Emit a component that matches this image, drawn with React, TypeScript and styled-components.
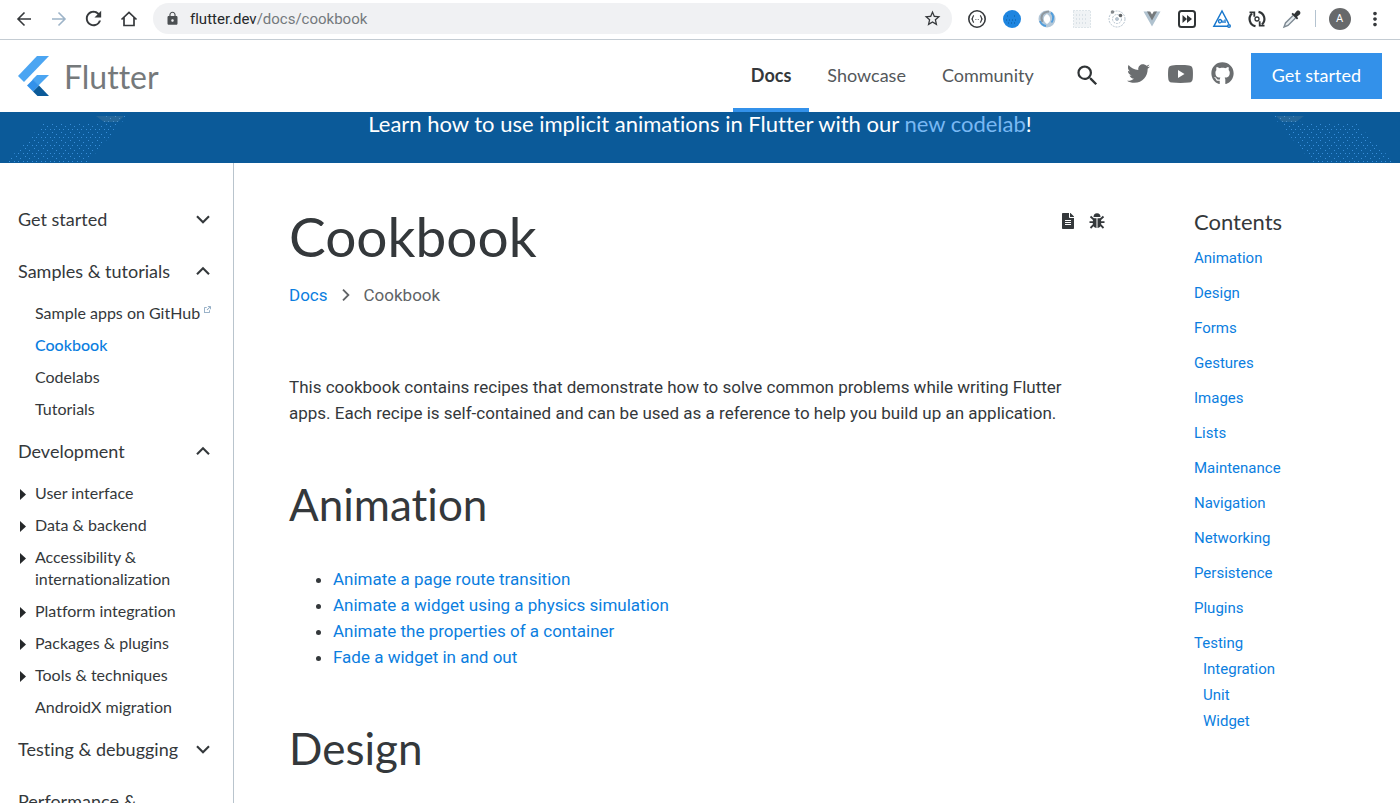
import React from "react";
import styled, { createGlobalStyle } from "styled-components";
import { MdLock, MdStarOutline, MdSearch, MdRefresh, MdMoreVert } from "react-icons/md";
import { FaTwitter, FaGithub, FaFileAlt } from "react-icons/fa";
import { RiExternalLinkLine } from "react-icons/ri";

const display = `Lato, "Noto Sans", sans-serif`;
const text = `Roboto, "Liberation Sans", sans-serif`;
const ink = "#34383b";
const blue = "#0b7ee0";

const GlobalStyle = createGlobalStyle`
  *, *::before, *::after { box-sizing: border-box; }
  body { margin: 0; background: #fff; color: ${ink}; font-family: ${text}; font-variant-ligatures: none; }
  a { text-decoration: none; color: inherit; }
  button { border: 0; background: none; padding: 0; color: inherit; font: inherit; font-variant-ligatures: none; cursor: pointer; }
  ul { list-style: none; margin: 0; padding: 0; }
  h1, h2, p { margin: 0; font-weight: 400; }
  svg { display: block; }
`;

const Window = styled.div`
  display: flex;
  flex-direction: column;
  height: 100vh;
  overflow: hidden;
`;

/* Browser toolbar */
const Toolbar = styled.div`
  display: flex;
  align-items: center;
  flex: none;
  height: 40px;
  padding: 0 8px 2px 12px;
  border-bottom: 1px solid #c4ccd3;
`;
const Tool = styled.button<{ $faded?: boolean }>`
  display: grid;
  place-items: center;
  flex: none;
  width: 35px;
  height: 32px;
  color: ${(p) => (p.$faded ? "#9db4c8" : "#36393c")};
`;
const NavTools = styled.div`
  display: flex;
  margin-left: -6px;
`;
const AddressBar = styled.div`
  display: flex;
  align-items: center;
  flex: 1;
  height: 31px;
  margin: 0 7px;
  padding: 0 10px 0 12px;
  gap: 10px;
  border-radius: 16px;
  background: #f0f1f3;
`;
const Address = styled.div`
  flex: 1;
  font-size: 15px;
  color: #74797d;
  b { font-weight: 400; color: #25282a; }
`;
const Divider = styled.span`
  width: 1px;
  height: 17px;
  margin: 0 6px;
  background: #b4c3d0;
`;
const Avatar = styled.span`
  display: grid;
  place-items: center;
  width: 22px;
  height: 22px;
  border-radius: 50%;
  background: #67696b;
  color: #fff;
  font-size: 11px;
`;

/* Site header */
const Header = styled.header`
  display: flex;
  align-items: center;
  flex: none;
  height: 72px;
  padding: 0 18px;
  font-family: ${display};
`;
const Brand = styled.a`
  display: flex;
  align-items: center;
  gap: 14px;
  margin-right: auto;
  font-size: 32px;
  color: #75797b;
`;
const SiteNav = styled.nav`
  display: flex;
  align-self: stretch;
`;
const NavLink = styled.a<{ $active?: boolean }>`
  display: flex;
  align-items: center;
  padding: 2px 18px 0;
  border-bottom: 4px solid ${(p) => (p.$active ? "#3391ea" : "transparent")};
  font-size: 18px;
  font-weight: ${(p) => (p.$active ? 700 : 400)};
  color: ${(p) => (p.$active ? "#34383b" : "#54585b")};
`;
const Socials = styled.div`
  display: flex;
  align-items: center;
  gap: 18px;
  margin: 0 17px 0 22px;
  padding-bottom: 5px;
  color: #6b6e70;
`;
const SearchButton = styled.button`
  margin: 4px 8px 0 0;
  color: #303436;
`;
const CallToAction = styled.button`
  height: 46px;
  padding: 0 21px 2px;
  background: #3391ea;
  color: #fff;
  font-size: 18px;
`;

/* Announcement strip */
const Banner = styled.div`
  position: relative;
  flex: none;
  height: 51px;
  background: #0b5a99;
  color: #fff;
  text-align: center;
  font-family: ${display};
  font-size: 22px;
  line-height: 23px;
  a { color: #79b8f3; }
`;
const Ribbon = styled.svg<{ $right?: boolean }>`
  position: absolute;
  bottom: 1px;
  ${(p) => (p.$right ? "right: 6px; transform: scaleX(-1);" : "left: 6px;")}
`;

const Body = styled.div`
  display: flex;
  flex: 1;
  min-height: 0;
`;

/* Sidebar */
const Sidebar = styled.aside`
  flex: none;
  width: 234px;
  padding: 30px 22px 0 18px;
  border-right: 1px solid #b9c4cd;
  font-family: ${display};
`;
const SectionToggle = styled.button`
  display: flex;
  align-items: center;
  justify-content: space-between;
  width: 100%;
  padding: 13px 0;
  text-align: left;
  white-space: pre;
  font-size: 18px;
  line-height: 26px;
`;
const SectionItem = styled.li`
  display: flex;
  align-items: flex-start;
  padding: 5px 0;
  font-size: 16px;
  line-height: 22px;
`;
const Marker = styled.span`
  flex: none;
  width: 17px;
  padding: 7px 0 0 2px;
`;
const ItemLink = styled.a<{ $active?: boolean }>`
  display: flex;
  gap: 3px;
  white-space: pre;
  color: ${(p) => (p.$active ? blue : ink)};
  font-weight: ${(p) => (p.$active ? 500 : 400)};
  svg { margin-top: 3px; }
`;

/* Article */
const Article = styled.main`
  flex: 1;
  min-width: 0;
  padding: 40px 0 0 55px;
`;
const TitleRow = styled.div`
  display: flex;
  justify-content: space-between;
  align-items: flex-start;
`;
const Title = styled.h1`
  font-family: ${display};
  font-size: 55px;
  line-height: 66px;
`;
const PageTools = styled.div`
  display: flex;
  align-items: center;
  gap: 13px;
  padding-top: 10px;
`;
const Crumbs = styled.nav`
  display: flex;
  align-items: center;
  gap: 12px;
  padding: 13px 0 66px;
  font-size: 17px;
  line-height: 26px;
  color: #606366;
  a { color: ${blue}; }
`;
const Intro = styled.p`
  font-size: 17px;
  line-height: 26px;
`;
const Heading = styled.h2`
  padding: 50px 0 34px;
  font-family: ${display};
  font-size: 44px;
  line-height: 56px;
`;
const Recipes = styled.ul`
  padding-left: 44px;
  list-style: disc;
  font-size: 17px;
  line-height: 26px;
  a { color: ${blue}; }
`;

/* Table of contents */
const Contents = styled.nav`
  flex: none;
  width: 295px;
  padding: 44px 0 0 89px;
`;
const ContentsTitle = styled.h2`
  padding-bottom: 4px;
  font-family: ${display};
  font-size: 22px;
  line-height: 30px;
`;
const ContentsList = styled.ul<{ $nested?: boolean }>`
  padding-left: ${(p) => (p.$nested ? 9 : 0)}px;
  font-size: 15px;
  line-height: 26px;
  color: ${blue};
  > li { padding: ${(p) => (p.$nested ? "0" : "4px 0 5px")}; }
`;

const Line = ({ d, size = 20, width = 2 }: { d: string; size?: number; width?: number }) => (
  <svg width={size} height={size} viewBox="0 0 20 20" fill="none" stroke="currentColor" strokeWidth={width}>
    <path d={d} />
  </svg>
);

const FlutterMark = () => (
  <svg width="32" height="40" viewBox="0 0 32 40">
    <path d="M19 0h12L6 26l-6-6z" fill="#4ba5f2" />
    <path d="M19 19h12L20.500 29.500 14.500 23.500z" fill="#4ba5f2" />
    <path d="M9 29.500l6-6 6 6-6 6z" fill="#3391ea" />
    <path d="M15 35.500l6-6L31 40H19.500z" fill="#0b5a99" />
  </svg>
);

const YoutubeMark = () => (
  <svg width="25" height="18" viewBox="0 0 25 18">
    <path
      fill="currentColor"
      fillRule="evenodd"
      d="M4 .4C9 0 16 0 21 .4 23.800.600 24.600 2 24.800 5c.2 3 .2 5 0 8-.2 3-1 4.400-3.800 4.600-5 .4-12 .4-17 0C1.200 17.400.400 16 .2 13 0 10 0 8 .2 5 .400 2 1.200.600 4 .4zM10 5v8l6.500-4z"
    />
  </svg>
);

const BugMark = () => (
  <svg width="16" height="16" viewBox="0 0 16 16" stroke="currentColor" fill="currentColor">
    <path d="M4.500 4a3.500 3.800 0 0 1 7 0z" strokeWidth="0" />
    <path d="M4 5.200h3.500v9.800C5.200 14.700 3.800 13 3.800 11zM12 5.200H8.500v9.800c2.300-.3 3.700-2 3.700-4z" strokeWidth="0" />
    <path d="M.5 9.200h4M11.500 9.200h4M1.500 3.500l3.300 3M14.500 3.500l-3.300 3M1.500 15l3.300-3.300M14.500 15l-3.300-3.300" strokeWidth="1.800" />
  </svg>
);

const BannerRibbon = ({ right }: { right?: boolean }) => {
  const id = right ? "dots-right" : "dots-left";
  return (
    <Ribbon $right={right} width="122" height="47" viewBox="0 0 122 47" aria-hidden>
      <defs>
        <pattern id={id} width="9" height="8" patternUnits="userSpaceOnUse">
          <path d="M1 1h1v1H1zM5 3h1v1H5zM8 6h1v1H8zM3 6h1v1H3z" fill="#3f97e6" />
        </pattern>
      </defs>
      <path d="M0 47L37 9h54L102 0h20L82 47z" fill={`url(#${id})`} opacity=".85" />
      <path d="M90 1h28l-6 6H98z" fill="#8b9aa0" opacity=".2" />
    </Ribbon>
  );
};

const extensions: { name: string; icon: React.ReactNode }[] = [
  {
    name: "JSON viewer",
    icon: (
      <svg width="20" height="20" viewBox="0 0 20 20" fill="none" stroke="#36393c" strokeWidth="1.600">
        <circle cx="10" cy="10" r="8.200" />
        <path d="M7 6.500C5.500 7 6 9 5 10c1 1 .5 3 2 3.500M13 6.500c1.500.5 1 2.500 2 3.500-1 1-.5 3-2 3.500" strokeWidth="1.200" />
        <path d="M8.500 10.500h.8M10.800 10.500h.8" strokeWidth="1.200" />
      </svg>
    ),
  },
  {
    name: "Blue dot",
    icon: (
      <svg width="20" height="20" viewBox="0 0 20 20">
        <circle cx="10" cy="10" r="9" fill="#1e85e0" />
        <path d="M5 7h2M12 7h2M4 11h12M6 14h8" stroke="#0b5a99" strokeDasharray="1 2" />
      </svg>
    ),
  },
  {
    name: "Swirl",
    icon: (
      <svg width="20" height="20" viewBox="0 0 20 20" fill="none">
        <path d="M10 1.500a8.500 8.500 0 1 1 0 17 8.500 8.500 0 0 1 0-17zM10 5c-5 3-3.500 8 0 10 4-2 4.500-7 0-10z" fill="#b3c7d8" fillRule="evenodd" />
        <path d="M12 2.500C5 3 3 8 5.500 13" stroke="#8f979d" strokeWidth="2" />
        <path d="M14 3.500c3 3 3 6 .5 10M3 12c1 3 3 4.500 6 5" stroke="#4e9ddd" strokeWidth="1.800" />
      </svg>
    ),
  },
  {
    name: "Grid",
    icon: (
      <svg width="20" height="20" viewBox="0 0 20 20" fill="#f0f3f5" stroke="#c5d0d9" strokeDasharray="1 2">
        <rect x="1.500" y="1.500" width="17" height="17" />
        <path d="M4 6h12M4 10h12M4 14h12" />
      </svg>
    ),
  },
  {
    name: "Orbit",
    icon: (
      <svg width="20" height="20" viewBox="0 0 20 20" fill="none" stroke="#b7c4cf">
        <circle cx="10" cy="10" r="8" strokeDasharray="2 1" />
        <circle cx="10" cy="10" r="4.500" strokeDasharray="2 1" />
        <circle cx="10" cy="10" r="1.500" fill="#b7c4cf" />
        <circle cx="5.500" cy="3" r="1.800" fill="#85898c" stroke="none" />
        <circle cx="13.500" cy="6.500" r="1.800" fill="#606467" stroke="none" />
      </svg>
    ),
  },
  {
    name: "Vue",
    icon: (
      <svg width="20" height="20" viewBox="0 0 20 20">
        <path d="M1.500 2.500h5L10 8.500l3.500-6h5L10 17.500z" fill="#b0c2cf" />
        <path d="M5 2.500h3.200l1.800 3 1.800-3H15l-5 9z" fill="#75797b" />
      </svg>
    ),
  },
  {
    name: "Skip",
    icon: (
      <svg width="20" height="20" viewBox="0 0 20 20">
        <rect x="2" y="2" width="16" height="16" rx="2.500" fill="none" stroke="#303436" strokeWidth="2" />
        <path d="M5.500 6l4.500 4-4.500 4zM10 6l5 4-5 4z" fill="#303436" />
      </svg>
    ),
  },
  {
    name: "Triangle",
    icon: (
      <svg width="20" height="20" viewBox="0 0 20 20" fill="none" stroke="#1676cc" strokeWidth="1.400">
        <path d="M16 17.300H1.800L10 2l6.800 12.800" />
        <circle cx="17" cy="17" r="1.300" />
        <path d="M8 10.500a1.500 1.700 0 1 0 .1 3.400 1.500 1.700 0 0 0-.1-3.400zM11 14v-2.500M13 10.500v3.500" />
      </svg>
    ),
  },
  {
    name: "Sync",
    icon: (
      <svg width="20" height="20" viewBox="0 0 20 20" fill="none" stroke="#303436" strokeWidth="2.200">
        <path d="M8.500 17.200A7.400 7.400 0 0 1 5 4.500M11.500 2.800A7.400 7.400 0 0 1 15 15.500" />
        <path d="M2.500 3.300h4.800v4.500M17.500 16.700h-4.800v-4.500" strokeWidth="1.800" />
        <circle cx="10" cy="10" r="2" strokeWidth="1.300" />
      </svg>
    ),
  },
  {
    name: "Colour picker",
    icon: (
      <svg width="20" height="20" viewBox="0 0 20 20">
        <path d="M11 6.500L3.500 14l-1.500 4 4-1.500L13.500 9" fill="#e6ebef" stroke="#7e8a93" strokeWidth="1.400" />
        <path d="M9.500 5l1.200-1.200 1.500 1.200 2.500-3c2-1.500 4.800 1 3.300 3.300l-3 2.500 1.200 1.500L15 10.500z" fill="#303436" />
      </svg>
    ),
  },
];

type Item = { label: string; active?: boolean; external?: boolean; expandable?: boolean };
const sections: { title: string; open?: boolean; items?: Item[] }[] = [
  { title: "Get started" },
  {
    title: "Samples & tutorials",
    open: true,
    items: [
      { label: "Sample apps on GitHub", external: true },
      { label: "Cookbook", active: true },
      { label: "Codelabs" },
      { label: "Tutorials" },
    ],
  },
  {
    title: "Development",
    open: true,
    items: [
      { label: "User interface", expandable: true },
      { label: "Data & backend", expandable: true },
      { label: "Accessibility &\ninternationalization", expandable: true },
      { label: "Platform integration", expandable: true },
      { label: "Packages & plugins", expandable: true },
      { label: "Tools & techniques", expandable: true },
      { label: "AndroidX migration" },
    ],
  },
  { title: "Testing & debugging" },
  { title: "Performance &\noptimization" },
];

const recipes = [
  "Animate a page route transition",
  "Animate a widget using a physics simulation",
  "Animate the properties of a container",
  "Fade a widget in and out",
];
const topics = ["Animation", "Design", "Forms", "Gestures", "Images", "Lists", "Maintenance", "Navigation", "Networking", "Persistence", "Plugins"];
const testing = ["Integration", "Unit", "Widget"];

export default function App() {
  return (
    <Window>
      <GlobalStyle />
      <Toolbar>
        <NavTools>
          <Tool aria-label="Back"><Line d="M17 10H4M10.500 3.500L4 10l6.500 6.500" width={1.6} /></Tool>
          <Tool aria-label="Forward" $faded><Line d="M3 10h13M9.500 3.500L16 10l-6.500 6.500" width={1.6} /></Tool>
          <Tool aria-label="Reload"><MdRefresh size={23} /></Tool>
          <Tool aria-label="Home"><Line d="M2.500 10.500L10 3.500l7.500 7M5 8.500v8h10v-8" width={1.7} /></Tool>
        </NavTools>
        <AddressBar>
          <MdLock size={15} color="#4b4f52" />
          <Address><b>flutter.dev</b>/docs/cookbook</Address>
          <MdStarOutline size={19} color="#36393c" />
        </AddressBar>
        {extensions.map((e) => (
          <Tool key={e.name} aria-label={e.name}>{e.icon}</Tool>
        ))}
        <Divider />
        <Tool aria-label="Profile"><Avatar>A</Avatar></Tool>
        <Tool aria-label="Menu"><MdMoreVert size={22} /></Tool>
      </Toolbar>

      <Header>
        <Brand href="#"><FlutterMark />Flutter</Brand>
        <SiteNav>
          <NavLink href="#" $active>Docs</NavLink>
          <NavLink href="#">Showcase</NavLink>
          <NavLink href="#">Community</NavLink>
        </SiteNav>
        <Socials>
          <SearchButton aria-label="Search"><MdSearch size={27} /></SearchButton>
          <a href="#" aria-label="Twitter"><FaTwitter size={23} /></a>
          <a href="#" aria-label="YouTube"><YoutubeMark /></a>
          <a href="#" aria-label="GitHub"><FaGithub size={23} /></a>
        </Socials>
        <CallToAction>Get started</CallToAction>
      </Header>

      <Banner>
        <BannerRibbon />
        <BannerRibbon right />
        Learn how to use implicit animations in Flutter with our <a href="#">new codelab</a>!
      </Banner>

      <Body>
        <Sidebar>
          {sections.map((s) => (
            <React.Fragment key={s.title}>
              <SectionToggle aria-expanded={!!s.open}>
                {s.title}
                <Line size={16} width={2.6} d={s.open ? "M2.500 14l7.500-7.500 7.500 7.500" : "M2.500 6.500l7.500 7.500 7.500-7.500"} />
              </SectionToggle>
              {s.items && (
                <ul>
                  {s.items.map((i) => (
                    <SectionItem key={i.label}>
                      <Marker>
                        {i.expandable && (
                          <svg width="6" height="11" viewBox="0 0 6 11"><path d="M0 0l6 5.500L0 11z" fill="#25282a" /></svg>
                        )}
                      </Marker>
                      <ItemLink href="#" $active={i.active}>
                        {i.label}
                        {i.external && <RiExternalLinkLine size={9} color="#7b9bb8" />}
                      </ItemLink>
                    </SectionItem>
                  ))}
                </ul>
              )}
            </React.Fragment>
          ))}
        </Sidebar>

        <Article>
          <TitleRow>
            <Title>Cookbook</Title>
            <PageTools>
              <a href="#" aria-label="View page source"><FaFileAlt size={16} /></a>
              <a href="#" aria-label="Report an issue"><BugMark /></a>
            </PageTools>
          </TitleRow>
          <Crumbs aria-label="Breadcrumb">
            <a href="#">Docs</a>
            <Line size={12} width={3} d="M5 1l9 9-9 9" />
            <span>Cookbook</span>
          </Crumbs>
          <Intro>
            This cookbook contains recipes that demonstrate how to solve common problems while writing Flutter
            apps. Each recipe is self-contained and can be used as a reference to help you build up an application.
          </Intro>
          <Heading>Animation</Heading>
          <Recipes>
            {recipes.map((r) => (
              <li key={r}><a href="#">{r}</a></li>
            ))}
          </Recipes>
          <Heading>Design</Heading>
        </Article>

        <Contents aria-label="Contents">
          <ContentsTitle>Contents</ContentsTitle>
          <ContentsList>
            {topics.map((t) => (
              <li key={t}><a href="#">{t}</a></li>
            ))}
            <li>
              <a href="#">Testing</a>
              <ContentsList $nested>
                {testing.map((t) => (
                  <li key={t}><a href="#">{t}</a></li>
                ))}
              </ContentsList>
            </li>
          </ContentsList>
        </Contents>
      </Body>
    </Window>
  );
}
